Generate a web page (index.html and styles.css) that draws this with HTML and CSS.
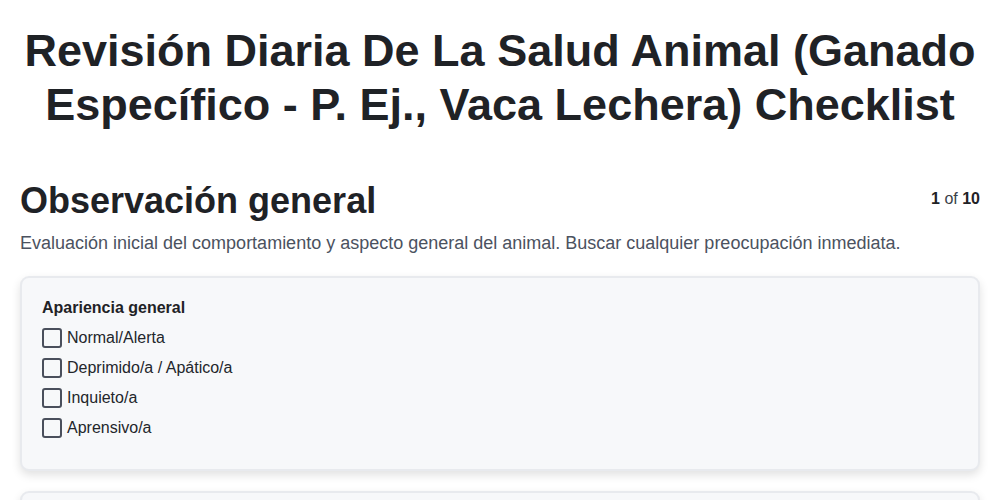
FILE: index.html
```html
<!DOCTYPE html>
<html lang="es">
<head>
<meta charset="utf-8">
<title>Checklist</title>
<link rel="stylesheet" href="styles.css">
</head>
<body>
<main class="page">
  <h1 class="title">Revisión Diaria De La Salud Animal (Ganado Específico - P. Ej., Vaca Lechera) Checklist</h1>
  <section class="section">
    <div class="section-head">
      <h2 class="section-title">Observación general</h2>
      <div class="pager"><b>1</b> of <b>10</b></div>
    </div>
    <p class="section-desc">Evaluación inicial del comportamiento y aspecto general del animal. Buscar cualquier preocupación inmediata.</p>
    <div class="card">
      <div class="card-title">Apariencia general</div>
      <label class="option"><span class="box"></span><span>Normal/Alerta</span></label>
      <label class="option"><span class="box"></span><span>Deprimido/a / Apático/a</span></label>
      <label class="option"><span class="box"></span><span>Inquieto/a</span></label>
      <label class="option"><span class="box"></span><span>Aprensivo/a</span></label>
    </div>
    <div class="card card-next"></div>
  </section>
</main>
</body>
</html>
```
FILE: styles.css
```css
* { box-sizing: border-box; }
html, body { margin: 0; padding: 0; background: #ffffff; }
body {
  font-family: "Liberation Sans", Arial, sans-serif;
  color: #23262b;
}
.page {
  padding: 24px 20px 0 20px;
}
.title {
  margin: 0;
  font-size: 45px;
  line-height: 54px;
  font-weight: 700;
  text-align: center;
  color: #1f2226;
}
.section { margin-top: 47px; }
.section-head {
  display: flex;
  justify-content: space-between;
  align-items: flex-start;
}
.section-title {
  margin: 0;
  font-size: 36px;
  line-height: 43px;
  font-weight: 700;
  color: #1f2226;
}
.pager {
  font-size: 16px;
  line-height: 20px;
  margin-top: 10px;
  color: #3a3f47;
}
.pager b { color: #1f2226; }
.section-desc {
  margin: 7px 0 0 0;
  font-size: 18px;
  line-height: 28px;
  color: #4b5260;
}
.card {
  margin-top: 19px;
  background: #f7f8fa;
  border: 2px solid #e8eaee;
  border-radius: 9px;
  padding: 20px 20px 26px 20px;
  box-shadow: 0 4px 10px rgba(0, 0, 0, 0.12);
}
.card-next { margin-top: 20px; height: 60px; }
.card-title {
  font-size: 16px;
  line-height: 20px;
  font-weight: 700;
  color: #1f2226;
  margin-bottom: 5px;
}
.option {
  display: flex;
  align-items: center;
  height: 30px;
  font-size: 16px;
  color: #23262b;
}
.box {
  width: 20px;
  height: 20px;
  border: 2px solid #4a4f5c;
  border-radius: 3px;
  margin-right: 5px;
  flex: none;
  background: #fff0;
}
```
